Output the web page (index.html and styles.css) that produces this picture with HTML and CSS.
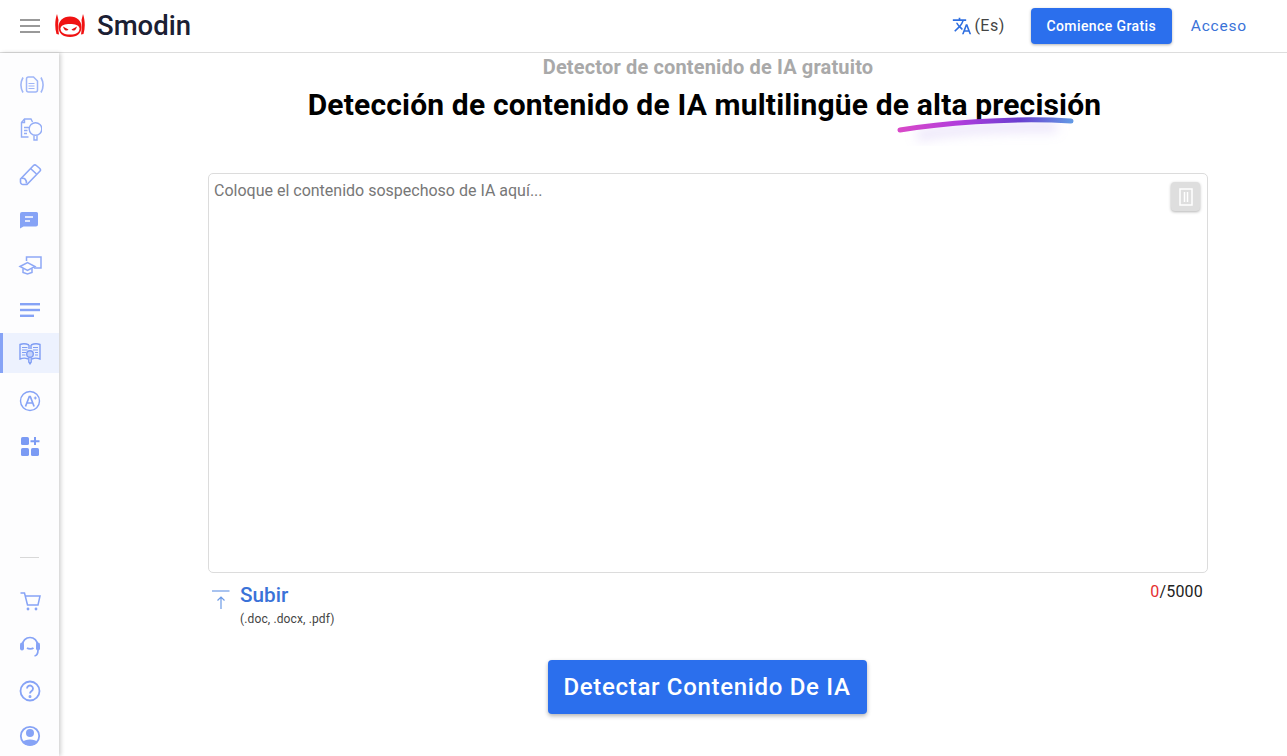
FILE: index.html
```html
<!DOCTYPE html>
<html lang="es">
<head>
  <meta charset="UTF-8">
  <title>Detector de contenido de IA gratuito</title>
  <link rel="stylesheet" href="styles.css">
</head>
<body>
  <header class="topbar">
    <div class="brand">
      <button class="burger" aria-label="Menu"><span></span><span></span><span></span></button>
      <svg class="logo" width="30" height="24" viewBox="0 0 30 24">
        <path d="M2 0 C0 6 -.5 13 1.500 20 L4 20.500 C3 15 3 9 3.500 6 Z M28 0 C30 6 30.500 13 28.500 20 L26 20.500 C27 15 27 9 26.500 6 Z" fill="#f01212"/>
        <path d="M15 2.500 C8 2.500 3.500 7 3.500 13 C3.500 19 7.500 23 15 23 C22.500 23 26.500 19 26.500 13 C26.500 7 22 2.500 15 2.500 Z" fill="#f01212"/>
        <path d="M15 10 C10 10 6 11 5.500 14.500 C5.500 18.500 9 20.500 15 20.500 C21 20.500 24.500 18.500 24.500 14.500 C24 11 20 10 15 10 Z" fill="#fff"/>
        <path d="M8 12.500 L13.500 15.500 C12.500 17.500 9 17 8 12.500 Z M22 12.500 L16.500 15.500 C17.500 17.500 21 17 22 12.500 Z" fill="#e01010"/>
      </svg>
      <span class="brand-name">Smodin</span>
    </div>
    <div class="top-actions">
      <div class="lang">
        <svg width="20" height="20" viewBox="0 0 24 24" fill="#2f6fe0"><path d="M12.870 15.070l-2.540-2.510.03-.03A17.520 17.520 0 0 0 14.070 6H17V4h-7V2H8v2H1v2h11.170C11.500 7.920 10.440 9.750 9 11.350 8.070 10.320 7.300 9.190 6.690 8h-2c.73 1.630 1.730 3.170 2.980 4.560l-5.090 5.020L4 19l5-5 3.110 3.110.76-2.040zM18.500 10h-2L12 22h2l1.120-3h4.750L21 22h2l-4.500-12zm-2.620 7l1.620-4.330L19.120 17h-3.240z"/></svg>
        <span>(Es)</span>
      </div>
      <a class="btn-start" href="#">Comience Gratis</a>
      <a class="login" href="#">Acceso</a>
    </div>
  </header>

  <div class="layout">
    <aside class="sidebar">
      <nav class="side-group">
        <a class="side-item" href="#">
          <svg class="icon-wide" width="28" height="24" viewBox="0 0 28 24" fill="none" stroke="#a0b6f7" stroke-width="1.500"><path d="M12.500 4h5l4 4v9a2 2 0 0 1-2 2h-7a2 2 0 0 1-2-2V6a2 2 0 0 1 2-2z"/><path d="M12.500 10.500h6M12.500 13h6M12.500 15.500h6" stroke-width="1.100"/><path d="M7 4.500C4.500 9 4.500 15 7 19.500M25 4.500c2.500 4.500 2.500 10.500 0 15" stroke-width="1.600"/></svg>
        </a>
        <a class="side-item" href="#">
          <svg width="24" height="24" viewBox="0 0 24 24" fill="none" stroke="#94adf6" stroke-width="1.400"><path d="M10.500 19H3.500V4.500L6.500 1h6.500l1.500 3"/><path d="M6.500 1v3.500h-3"/><path d="M6 9.500h5M6 12.500h3.500M6 15.500h3"/><circle cx="17.500" cy="11" r="6.300"/><path d="M16 17.500V22h3v-4.500"/></svg>
        </a>
        <a class="side-item" href="#">
          <svg width="24" height="24" viewBox="0 0 24 24" fill="none" stroke="#8ea8f6" stroke-width="1.600"><path d="M2.500 16 15.500 2.500a2 2 0 0 1 2.800 0l3.500 3a2 2 0 0 1 0 2.800L9 21.500H5a2.500 2.500 0 0 1-2.500-2.500z"/><path d="M12.500 5.500l6 5.500M3.500 15.500c3-1 5 1 5 5"/></svg>
        </a>
        <a class="side-item" href="#">
          <svg width="24" height="24" viewBox="0 0 24 24"><path d="M4 4h14.500A1.500 1.500 0 0 1 20 5.500v11a2 2 0 0 1-2 2H5.500L2 20.500V6a2 2 0 0 1 2-2z" fill="#86a3f6"/><path d="M7 9h8M7 13h5" stroke="#fff" stroke-width="1.500"/></svg>
        </a>
        <a class="side-item" href="#">
          <svg width="24" height="24" viewBox="0 0 24 24" fill="none" stroke="#8ea8f6" stroke-width="1.500"><path d="M8.500 8V4h14.500v11h-7"/><path d="M2 13.500 9.500 9.500l7.500 4-7.500 4z"/><path d="M5 15.500v4l4.500 1.500 4.500-1.500v-4"/></svg>
        </a>
        <a class="side-item" href="#">
          <svg width="24" height="24" viewBox="0 0 24 24" fill="#86a3f6"><rect x="2" y="5" width="20" height="2.400"/><rect x="2" y="10.800" width="20" height="2.400"/><rect x="2" y="16.600" width="14" height="2.400"/></svg>
        </a>
        <a class="side-item active" href="#">
          <svg width="24" height="24" viewBox="0 0 24 24" fill="none" stroke="#7f9df4" stroke-width="1.400"><path d="M11 4C8 2.500 4.500 2.500 2 3.500V18c2.500-1 6-1 8 0"/><path d="M13 4c3-1.500 6.500-1.500 9-.5V18c-2.500-1-6-1-8 0"/><path d="M4 6.500h5.500M4 9h5.500M4 11.500h4M4 14h3.500M15 6.500h5M15 9h5M17 11.500h3M17 14h3" stroke-width="1.200"/><path d="M11 4v4M13 4v4"/><circle cx="12" cy="13" r="3.300" fill="#c5d3fa"/><path d="M10.800 16.500V21l1.200 1.800 1.200-1.800v-4.500"/></svg>
        </a>
        <a class="side-item" href="#">
          <svg width="24" height="24" viewBox="0 0 24 24" fill="none" stroke="#86a3f6" stroke-width="1.400"><circle cx="12" cy="12" r="9.500"/><path d="M7.500 17.500 11.300 7.500h1l3.800 10M8.800 14h6.400" stroke-width="1.700"/><path d="M17.300 7.500v3M15.800 9h3" stroke-width="1.100"/></svg>
        </a>
        <a class="side-item" href="#">
          <svg width="24" height="24" viewBox="0 0 24 24" fill="#7b9bf4"><rect x="3" y="3" width="8" height="8" rx="1.600"/><rect x="3" y="14" width="8" height="8" rx="1.600"/><rect x="13" y="14" width="8" height="8" rx="1.600"/><path d="M16 3h2v3.200h3.500v2H18V11h-2V8.200h-3.500v-2H16z"/></svg>
        </a>
      </nav>
      <nav class="side-group side-bottom">
        <div class="side-rule"></div>
        <a class="side-item" href="#">
          <svg width="24" height="24" viewBox="0 0 24 24" fill="none" stroke="#86a3f6" stroke-width="1.500"><path d="M2.500 4H6.500L9.500 16h10.500l2-9H7"/><circle cx="10" cy="20" r="1.400" fill="#86a3f6" stroke="none"/><circle cx="18" cy="20" r="1.400" fill="#86a3f6" stroke="none"/></svg>
        </a>
        <a class="side-item" href="#">
          <svg width="24" height="24" viewBox="0 0 24 24" fill="none" stroke="#86a3f6" stroke-width="1.700"><path d="M4.500 11a7.500 7.500 0 0 1 15 0"/><rect x="2" y="8.500" width="4" height="8" rx="2" fill="#86a3f6" stroke="none"/><rect x="18" y="8.500" width="4" height="8" rx="2" fill="#86a3f6" stroke="none"/><path d="M20 16c0 3.500-1 5.500-3.500 6"/><path d="M9 14c1.500 1.200 5 1.200 6.500 0"/></svg>
        </a>
        <a class="side-item" href="#">
          <svg width="24" height="24" viewBox="0 0 24 24" fill="none" stroke="#86a3f6" stroke-width="1.800"><circle cx="12" cy="12" r="9.500"/><path d="M9 9.500a3 3 0 1 1 4.500 2.600c-1 .6-1.500 1.100-1.500 2.400"/><circle cx="12" cy="17.500" r=".6" fill="#86a3f6"/></svg>
        </a>
        <a class="side-item" href="#">
          <svg width="24" height="24" viewBox="0 0 24 24" fill="none"><circle cx="12" cy="12" r="9.200" stroke="#86a3f6" stroke-width="1.800"/><circle cx="12" cy="9" r="4" fill="#86a3f6"/><path d="M4.500 18c2-3.500 13-3.500 15 0-2 2.800-4.500 3.600-7.500 3.600S6.500 20.800 4.500 18z" fill="#86a3f6"/></svg>
        </a>
      </nav>
    </aside>

    <main class="content">
      <h2 class="eyebrow">Detector de contenido de IA gratuito</h2>
      <h1 class="headline">Detección de contenido de IA multilingüe de <span class="marked">alta precisión<svg class="swoosh" width="178" height="38" viewBox="0 0 178 38">
        <defs>
          <linearGradient id="sw" x1="0" x2="1" y1="0" y2="0">
            <stop offset="0" stop-color="#d848c8"/>
            <stop offset=".35" stop-color="#b03cdc"/>
            <stop offset=".7" stop-color="#6a3fd0"/>
            <stop offset="1" stop-color="#6398e4"/>
          </linearGradient>
          <filter id="sw-glow" x="-20%" y="-100%" width="140%" height="300%"><feGaussianBlur stdDeviation="6"/></filter>
        </defs>
        <path d="M20 20 C60 12 120 10 160 11" stroke="#b9a2ee" stroke-opacity=".3" stroke-width="10" fill="none" filter="url(#sw-glow)"/>
        <path d="M3 14 C40 8 110 1 174 5" stroke="url(#sw)" stroke-width="5" stroke-linecap="round" fill="none"/>
      </svg></span></h1>

      <div class="editor">
        <div class="placeholder">Coloque el contenido sospechoso de IA aquí...</div>
        <button class="trash" aria-label="Borrar">
          <svg width="14" height="18" viewBox="0 0 14 18" fill="none" stroke="#fff" stroke-width="1.500"><rect x="1" y="1" width="12" height="16"/><path d="M5.500 4v10M8.500 4v10"/></svg>
        </button>
      </div>

      <div class="under-editor">
        <div class="upload">
          <svg class="upload-icon" width="20" height="22" viewBox="0 0 20 22" fill="none" stroke="#6d9be6" stroke-width="1.200"><path d="M1 2h17.500"/><path d="M10 20V8M6.500 11.500 10 8l3.500 3.500"/></svg>
          <div>
            <div class="upload-title">Subir</div>
            <div class="upload-types">(.doc, .docx, .pdf)</div>
          </div>
        </div>
        <div class="counter"><span class="count-now">0</span>/5000</div>
      </div>

      <div class="action">
        <button class="btn-detect">Detectar Contenido De IA</button>
      </div>
    </main>
  </div>
</body>
</html>
```

FILE: styles.css
```css
:root {
  --blue: #2b6fed;
  --link: #3a72d8;
  --line: #dddddd;
}
* { box-sizing: border-box; margin: 0; padding: 0; }
html, body { height: 756px; overflow: hidden; }
body {
  font-family: Roboto, 'Liberation Sans', sans-serif;
  background: #ffffff;
  color: #1a1a1a;
}
a { text-decoration: none; }
button { border: none; cursor: pointer; font-family: inherit; }

.topbar {
  height: 53px;
  display: flex;
  justify-content: space-between;
  align-items: center;
  padding: 0 40px 1px 20px;
  border-bottom: 1px solid var(--line);
  background: #fff;
}
.brand { display: flex; align-items: center; }
.burger {
  width: 20px;
  height: 14px;
  display: flex;
  flex-direction: column;
  justify-content: space-between;
  background: none;
  margin-right: 15px;
}
.burger span { display: block; height: 2px; background: #999; }
.logo { margin-right: 12px; }
.brand-name { font-size: 27.5px; line-height: 34px; font-weight: 500; color: #1b2033; padding-top: 1px; }

.top-actions { display: flex; align-items: center; }
.lang {
  display: flex;
  align-items: center;
  gap: 2px;
  font-size: 16px;
  letter-spacing: .5px;
  color: #444;
  margin-right: 26px;
}
.btn-start {
  height: 36px;
  width: 141px;
  display: flex;
  align-items: center;
  justify-content: center;
  background: var(--blue);
  color: #fff;
  font-size: 14px;
  font-weight: 500;
  letter-spacing: .4px;
  border-radius: 4px;
  box-shadow: 0 1px 3px rgba(0,0,0,.3);
  margin-right: 19px;
}
.login { font-size: 15.5px; letter-spacing: .8px; color: var(--link); }

.layout { display: flex; height: 703px; }
.sidebar {
  width: 59px;
  flex-shrink: 0;
  display: flex;
  flex-direction: column;
  justify-content: space-between;
  background: #fdfdfe;
  box-shadow: 2px 0 4px rgba(0,0,0,.18);
  padding-top: 9px;
}
.side-group { display: flex; flex-direction: column; }
.side-item {
  height: 45px;
  display: flex;
  align-items: center;
  justify-content: center;
}
.side-item.active {
  height: 40px;
  margin: 1px 0 5px;
  background: #edf2fe;
  border-left: 3px solid #86a3f6;
  padding-right: 3px;
}
.icon-wide { margin-left: 1px; }
.side-rule {
  width: 19px;
  height: 1px;
  background: #d8d8d8;
  margin: 0 0 20px 20px;
}
.side-bottom { margin-bottom: -2px; }

.content {
  flex: 1;
  padding: 2px 79px 0 149px;
  display: flex;
  flex-direction: column;
  min-width: 0;
}
.eyebrow {
  text-align: center;
  font-size: 20px;
  line-height: 24px;
  font-weight: 700;
  letter-spacing: .15px;
  color: #a9a9a9;
}
.headline {
  text-align: center;
  font-size: 30px;
  line-height: 36px;
  font-weight: 700;
  letter-spacing: .17px;
  color: #000;
  margin-top: 8px;
  padding-right: 7px;
}
.marked { position: relative; }
.swoosh {
  position: absolute;
  left: -20px;
  top: 29px;
  z-index: 1;
  pointer-events: none;
}
.editor {
  position: relative;
  height: 400px;
  margin-top: 50px;
  border: 1px solid #dcdcdc;
  border-radius: 5px;
  padding: 7px 5px;
}
.placeholder { font-size: 16px; line-height: 20px; color: #777; }
.trash {
  position: absolute;
  top: 8px;
  right: 7px;
  width: 29px;
  height: 29px;
  display: flex;
  align-items: center;
  justify-content: center;
  background: #dedede;
  border-radius: 4px;
  box-shadow: 0 1px 3px rgba(0,0,0,.3);
}
.under-editor {
  display: flex;
  justify-content: space-between;
  align-items: flex-start;
  padding: 10px 5px 0 3px;
}
.upload { display: flex; gap: 9px; }
.upload-icon { margin-top: 6px; }
.upload-title { font-size: 20.700px; line-height: 24px; font-weight: 500; color: var(--link); }
.upload-types { font-size: 12px; line-height: 14px; color: #444; margin-top: 5px; letter-spacing: .13px; }
.counter { font-size: 16px; line-height: 18px; color: #222; letter-spacing: .2px; }
.count-now { color: #e53030; }

.action { display: flex; justify-content: center; margin-top: 34px; padding-right: 2px; }
.btn-detect {
  width: 319px;
  height: 54px;
  background: var(--blue);
  color: #fff;
  font-size: 24px;
  font-weight: 500;
  letter-spacing: .68px;
  border-radius: 4px;
  box-shadow: 0 2px 4px rgba(0,0,0,.3);
}
```
